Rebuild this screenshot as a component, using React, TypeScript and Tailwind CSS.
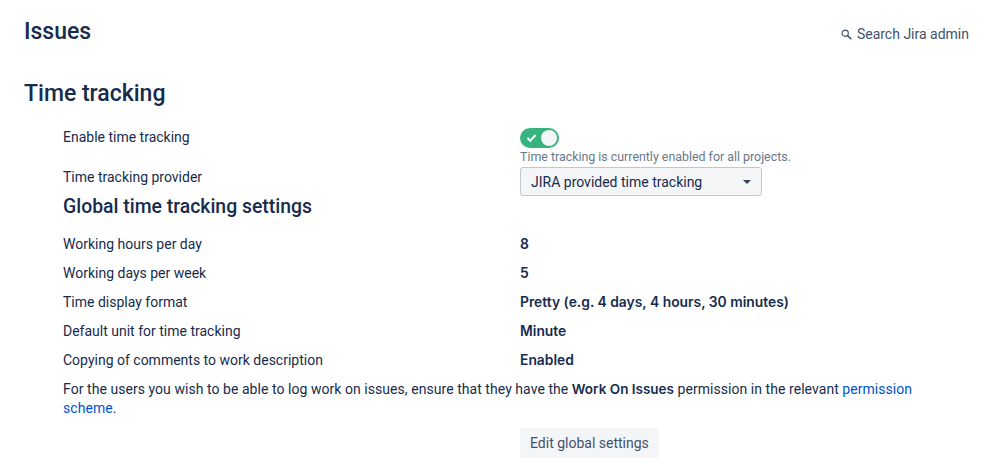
const rows = [
  ["Working hours per day", "8"],
  ["Working days per week", "5"],
  ["Time display format", "Pretty (e.g. 4 days, 4 hours, 30 minutes)"],
  ["Default unit for time tracking", "Minute"],
  ["Copying of comments to work description", "Enabled"],
];

export default function App() {
  return (
    <div className="w-[999px] h-[470px] overflow-hidden bg-white text-[#172b4d] font-['Roboto','Liberation_Sans',sans-serif] text-[14px] leading-[20px] pl-[24px] pr-[30px] pt-[18px]">
      <div className="flex items-start justify-between h-[28px]">
        <h1 className="text-[23px] leading-[28px] font-medium">Issues</h1>
        <div className="flex items-center gap-[5px] text-[#42526e] mt-[6px]">
          <svg width="11" height="11" viewBox="0 0 11 11" fill="none" stroke="#42526e" strokeWidth="1.2"><circle cx="4.2" cy="4.2" r="3.1" /><path d="M6.6 6.6 10.3 10.3" strokeWidth="1.5" /></svg>
          <span>Search Jira admin</span>
        </div>
      </div>
      <h2 className="text-[23px] leading-[28px] font-medium mt-[34px]">Time tracking</h2>
      <div className="pl-[39px] mt-[20px]">
        <div className="grid grid-cols-[457px_1fr]">
          <div className="mt-[-1px]">Enable time tracking</div>
          <div>
            <div className="w-[39px] h-[20px] rounded-full bg-[#36b37e] relative">
              <svg className="absolute left-[6px] top-[5px]" width="11" height="10" viewBox="0 0 11 10" fill="none" stroke="white" strokeWidth="2"><path d="M1.5 5 4.2 7.8 9.5 2" /></svg>
              <div className="absolute right-[2px] top-[2px] w-[16px] h-[16px] rounded-full bg-[#f4f5f7]" />
            </div>
            <div className="text-[12.4px] leading-[16px] text-[#6b778c] mt-[1px]">Time tracking is currently enabled for all projects.</div>
          </div>
          <div className="mt-[2px]">Time tracking provider</div>
          <div className="w-[242px] h-[29px] border border-[#c1c7d0] rounded-[3px] bg-[#f4f5f7] flex items-center justify-between pl-[10px] pr-[10px] mt-[2px]">
            <span>JIRA provided time tracking</span>
            <span className="w-0 h-0 border-x-[4px] border-x-transparent border-t-[4px] border-t-[#344563]" />
          </div>
        </div>
        <h3 className="text-[19.4px] leading-[24px] font-medium mt-[-1px]">Global time tracking settings</h3>
        <div className="mt-[15px] flex flex-col gap-[9px]">
          {rows.map(([k, v]) => (
            <div key={k} className="grid grid-cols-[457px_1fr]">
              <div>{k}</div>
              <div className="font-['Inter'] font-semibold text-[13.85px]">{v}</div>
            </div>
          ))}
        </div>
        <p className="mt-[10px] pr-[20px] leading-[19px] tracking-[0.05px]">
          For the users you wish to be able to log work on issues, ensure that they have the <b className="font-['Inter'] font-semibold text-[13.5px] tracking-normal">Work On Issues</b> permission in the relevant <span className="text-[#0052cc]">permission scheme</span>.
        </p>
        <div className="pl-[457px] mt-[10px]">
          <div className="inline-flex items-center h-[30px] px-[10px] rounded-[3px] bg-[#f4f5f7] text-[#42526e]">Edit global settings</div>
        </div>
      </div>
    </div>
  );
}
